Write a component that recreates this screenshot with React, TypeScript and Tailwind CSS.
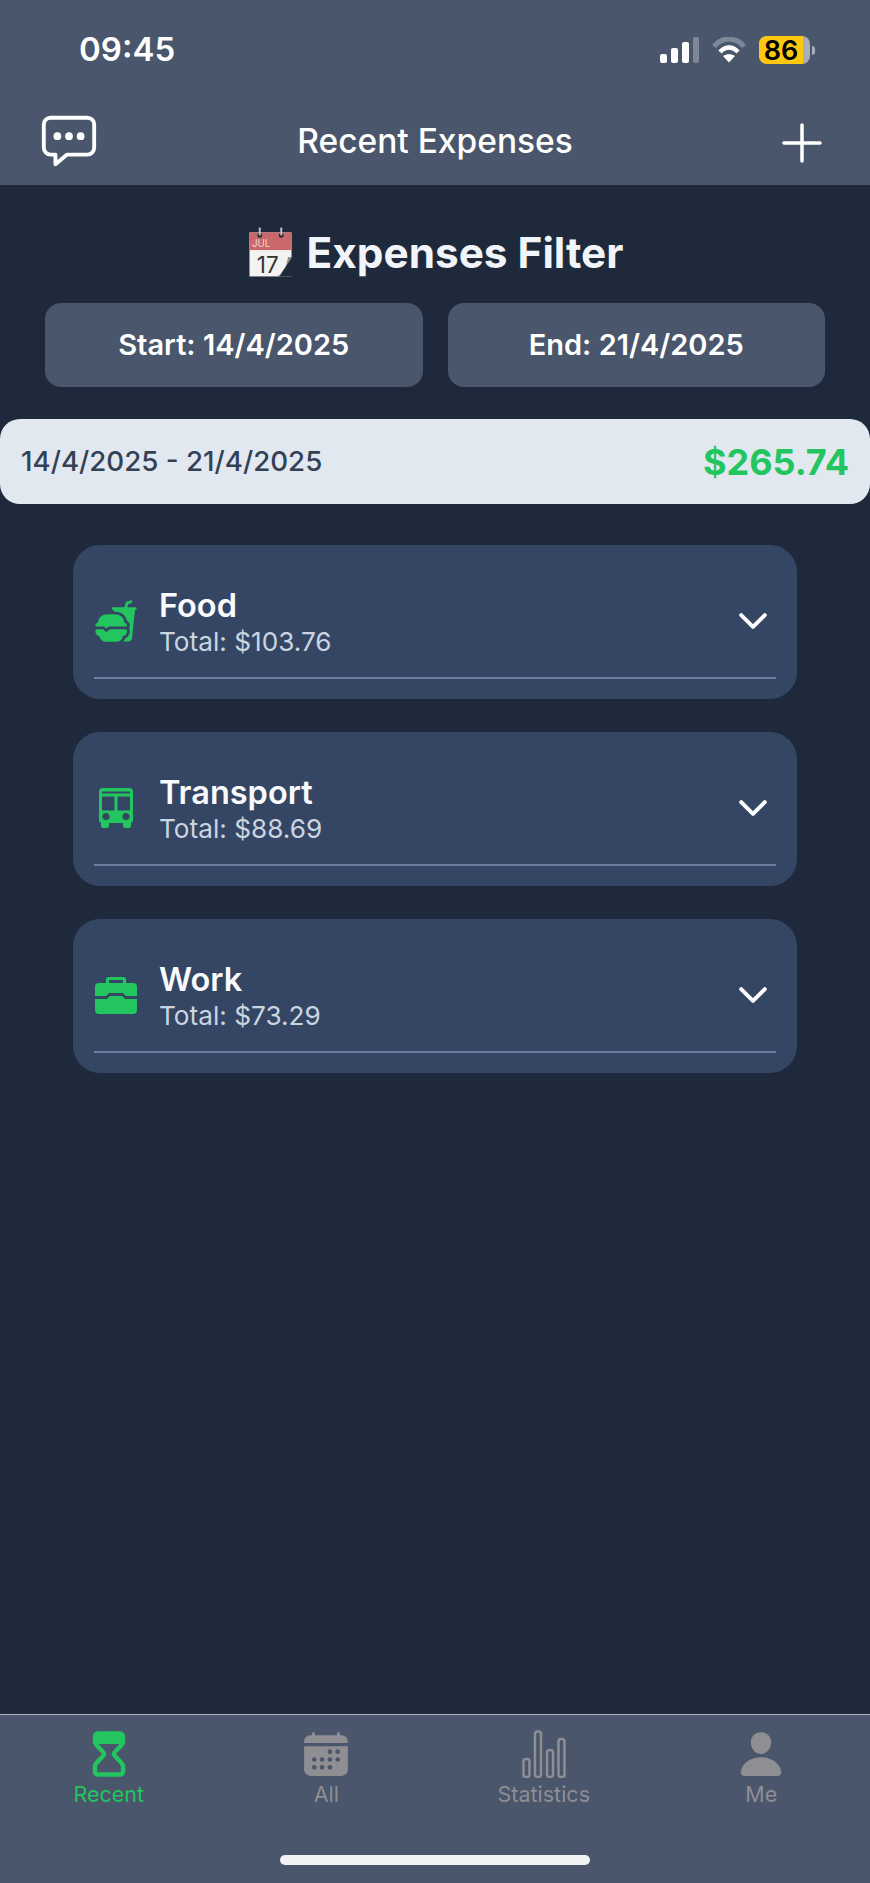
import { IoFastFood, IoCalendar, IoPerson, IoChatboxEllipsesOutline, IoChevronDown } from 'react-icons/io5';

const categories = [
  { name: 'Food', total: '$103.76', icon: <IoFastFood className="w-[46px] h-[46px] text-[#22c55e]" /> },
  { name: 'Transport', total: '$88.69', icon: <BusIcon /> },
  { name: 'Work', total: '$73.29', icon: <ToolboxIcon /> },
];

function BusIcon() {
  return (
    <svg width="36" height="42" viewBox="0 0 36 42" fill="none">
      <path
        fillRule="evenodd"
        fill="#22c55e"
        d="M5 1h26a4 4 0 0 1 4 4v28a3 3 0 0 1-2 3v3a2 2 0 0 1-2 2h-4a2 2 0 0 1-2-2v-3H11v3a2 2 0 0 1-2 2H5a2 2 0 0 1-2-2v-3a3 3 0 0 1-2-3V5a4 4 0 0 1 4-4ZM4 4.500v2h28v-2H4Zm0 5v14h12.500V9.500H4Zm15.500 0v14H32v-14H19.500ZM8 26a3.500 3.500 0 1 0 0 7 3.500 3.500 0 0 0 0-7Zm20 0a3.500 3.500 0 1 0 0 7 3.500 3.500 0 0 0 0-7Z"
      />
    </svg>
  );
}

function ToolboxIcon() {
  return (
    <svg width="42" height="37" viewBox="0 0 42 37" fill="none">
      <path
        fill="#22c55e"
        fillRule="evenodd"
        d="M11 6V3a3 3 0 0 1 3-3h14a3 3 0 0 1 3 3v3h7a4 4 0 0 1 4 4v9H31l-3-3H14l-3 3H0v-9a4 4 0 0 1 4-4h7Zm3 0h14V3H14v3Z"
      />
      <path
        fill="#22c55e"
        d="M0 22h12l2.500-3h13l2.500 3h12v11a4 4 0 0 1-4 4H4a4 4 0 0 1-4-4V22Z"
      />
    </svg>
  );
}

function CalendarEmoji() {
  return (
    <svg className="-mt-[3px] overflow-visible" width="43" height="50" viewBox="0 0 44 50">
      <rect x="0.500" y="5" width="43" height="45" fill="#f3f3f1" />
      <rect x="0.500" y="5" width="43" height="18" fill="#c9686a" />
      <path d="M44 30 31 50h-3c8-3 10-10 12-20Z" fill="#8a8a8a" />
      <path d="M44 30v20H31Z" fill="#1e2a3b" />
      <circle cx="11" cy="8" r="2.500" fill="#2a2a2a" />
      <circle cx="33" cy="8" r="2.500" fill="#2a2a2a" />
      <rect x="10" y="0" width="2" height="8" fill="#b9c4cc" />
      <rect x="32" y="0" width="2" height="8" fill="#b9c4cc" />
      <text x="3" y="20" fontSize="10" fontFamily="Inter, sans-serif" fill="#f4d6d6">JUL</text>
      <text x="8" y="46" fontSize="23" fontFamily="Inter, sans-serif" fill="#333333">17</text>
    </svg>
  );
}

function HourglassIcon() {
  return (
    <svg width="34" height="46" viewBox="0 0 34 46" fill="none">
      <path
        d="M6 2.500h22a3 3 0 0 1 3 3v5c0 5-8 8-9 12.500 1 4.500 9 7.500 9 12.500v5a3 3 0 0 1-3 3H6a3 3 0 0 1-3-3v-5c0-5 8-8 9-12.500C11 18.500 3 15.500 3 10.500v-5a3 3 0 0 1 3-3Z"
        stroke="#22c55e"
        strokeWidth="4.500"
        strokeLinejoin="round"
      />
      <path d="M5 4h24v9H5z" fill="#22c55e" />
    </svg>
  );
}

function StatsIcon() {
  return (
    <svg width="44" height="48" viewBox="0 0 44 48" fill="none" stroke="#8e8e93" strokeWidth="2.500">
      <rect x="1.500" y="29" width="6" height="18" rx="2.500" />
      <rect x="13" y="1.500" width="6" height="45.500" rx="2.500" />
      <rect x="25" y="20" width="6" height="27" rx="2.500" />
      <rect x="36.500" y="9" width="6" height="38" rx="2.500" />
    </svg>
  );
}

function StatusBar() {
  return (
    <div className="h-[100px] flex items-center justify-between pl-[79px] pr-[55px]">
      <span className="text-[33px] font-semibold text-white">09:45</span>
      <div className="flex items-center gap-[13px]">
        <svg width="39" height="26" viewBox="0 0 39 26">
          <rect x="0" y="17" width="7" height="9" rx="2" fill="#fff" />
          <rect x="11" y="11" width="7" height="15" rx="2" fill="#fff" />
          <rect x="22" y="5" width="7" height="21" rx="2" fill="#fff" />
          <rect x="33" y="0" width="6" height="26" rx="2" fill="#7c8798" />
        </svg>
        <svg width="34" height="26" viewBox="0 0 34 26" fill="none">
          <path d="M2 9.500C10-.5 24-.5 32 9.500" stroke="#7c8798" strokeWidth="5" />
          <path d="M8 15c5.500-6 12.500-6 18 0" stroke="#fff" strokeWidth="4.500" />
          <path d="M17 25.500 11 19c3.500-2.500 8.500-2.500 12 0Z" fill="#fff" />
        </svg>
        <div className="flex items-center gap-[2px]">
          <div className="w-[51px] h-[28px] rounded-[8px] flex bg-[#a8afb9]">
            <div className="w-[44px] rounded-l-[8px] bg-[#fdc80f] flex items-center justify-center text-[27px] leading-none font-semibold text-black">
              86
            </div>
          </div>
          <div className="w-[3px] h-[9px] rounded-r-full bg-[#a8afb9]" />
        </div>
      </div>
    </div>
  );
}

export default function App() {
  return (
    <div className="w-[870px] h-[1883px] flex flex-col bg-[#1e2a3b] font-['Inter',sans-serif] overflow-hidden">
      <header className="h-[185px] bg-[#49566b]">
        <StatusBar />
        <div className="h-[85px] grid grid-cols-[1fr_auto_1fr] items-center px-[48px]">
          <IoChatboxEllipsesOutline className="w-[62px] h-[62px] text-white -mt-[4px] -ml-[10px]" />
          <span className="-mt-[2px] text-[33.500px] font-medium text-white">Recent Expenses</span>
          <svg className="justify-self-end" width="40" height="40" viewBox="0 0 40 40" stroke="#fff" strokeWidth="3.500" strokeLinecap="round">
            <path d="M20 2v36M2 20h36" />
          </svg>
        </div>
      </header>

      <main className="flex-1 flex flex-col">
        <div className="mt-[43px] h-[50px] flex items-center justify-center gap-[15px] pl-[2px]">
          <CalendarEmoji />
          <h1 className="text-[42.300px] font-bold text-[#f1f5f9]">Expenses Filter</h1>
        </div>

        <div className="mt-[25px] px-[45px] grid grid-cols-2 gap-[25px]">
          <button className="h-[84px] rounded-[16px] bg-[#49566b] text-[29px] font-semibold text-white">
            Start: 14/4/2025
          </button>
          <button className="h-[84px] rounded-[16px] bg-[#49566b] text-[29px] font-semibold text-white">
            End: 21/4/2025
          </button>
        </div>

        <div className="mt-[32px] h-[85px] rounded-[20px] bg-[#e2e8f0] flex items-center justify-between px-[21px]">
          <span className="text-[27.700px] font-medium text-[#334155]">14/4/2025 - 21/4/2025</span>
          <span className="text-[36px] font-bold text-[#22c55e]">$265.74</span>
        </div>

        <div className="mt-[41px] mx-[73px] flex flex-col gap-[33px]">
          {categories.map((category) => (
            <div key={category.name} className="h-[154px] rounded-[27px] bg-[#354664] px-[21px] pt-[20px]">
              <div className="h-[114px] border-b-2 border-[#6b7d9c] flex items-center">
                <div className="w-[44px] flex items-center justify-center">{category.icon}</div>
                <div className="ml-[21px] pt-[4px] flex-1">
                  <div className="text-[32.500px] leading-[36px] font-semibold text-[#f8fafc]">{category.name}</div>
                  <div className="mt-[2px] text-[26.200px] leading-[32px] text-[#cbd5e1]">Total: {category.total}</div>
                </div>
                <IoChevronDown className="w-[42px] h-[42px] text-white mr-[2px]" />
              </div>
            </div>
          ))}
        </div>
      </main>

      <nav className="h-[169px] bg-[#49566b] border-t border-[#aeb6c2]">
        <div className="grid grid-cols-4 pt-[14px]">
          <div className="flex flex-col items-center">
            <div className="h-[50px] flex items-center"><HourglassIcon /></div>
            <span className="mt-[1px] text-[21.500px] leading-[28px] text-[#22c55e]">Recent</span>
          </div>
          <div className="flex flex-col items-center">
            <div className="h-[50px] flex items-center"><IoCalendar className="w-[50px] h-[50px] text-[#8e8e93]" /></div>
            <span className="mt-[1px] text-[21.500px] leading-[28px] text-[#8e8e93]">All</span>
          </div>
          <div className="flex flex-col items-center">
            <div className="h-[50px] flex items-center"><StatsIcon /></div>
            <span className="mt-[1px] text-[21.500px] leading-[28px] text-[#8e8e93]">Statistics</span>
          </div>
          <div className="flex flex-col items-center">
            <div className="h-[50px] flex items-center"><IoPerson className="w-[50px] h-[50px] text-[#8e8e93]" /></div>
            <span className="mt-[1px] text-[21.500px] leading-[28px] text-[#8e8e93]">Me</span>
          </div>
        </div>
        <div className="mt-[47px] mx-auto w-[310px] h-[10px] rounded-full bg-[#f2f2f5]" />
      </nav>
    </div>
  );
}
